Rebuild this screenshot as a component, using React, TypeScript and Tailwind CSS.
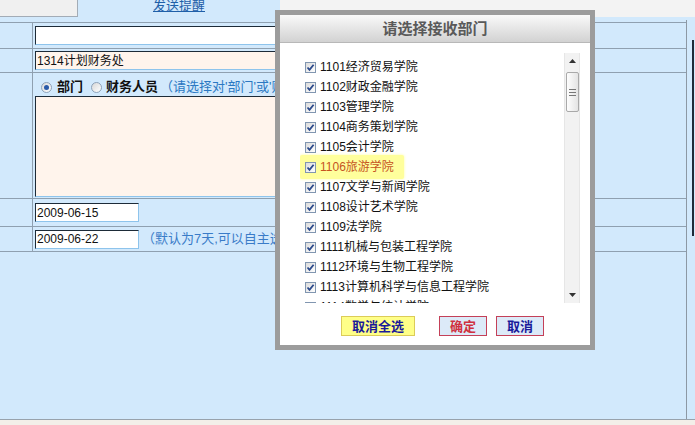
import React from 'react';

const depts = [
  '1101经济贸易学院',
  '1102财政金融学院',
  '1103管理学院',
  '1104商务策划学院',
  '1105会计学院',
  '1106旅游学院',
  '1107文学与新闻学院',
  '1108设计艺术学院',
  '1109法学院',
  '1111机械与包装工程学院',
  '1112环境与生物工程学院',
  '1113计算机科学与信息工程学院',
  '1114数学与统计学院',
];

function CheckBox() {
  return (
    <span className="w-[11px] h-[11px] mr-[4px] shrink-0 border border-[#8196b0] bg-gradient-to-br from-[#dcdcdc] to-white flex items-center justify-center">
      <svg width="9" height="9" viewBox="0 0 9 9" aria-hidden="true">
        <path d="M1.5 4.5 L3.5 6.8 L7.6 1.8" fill="none" stroke="#2c4a8c" strokeWidth="1.8" />
      </svg>
    </span>
  );
}

function Radio({ checked }: { checked?: boolean }) {
  return (
    <span className="w-[11px] h-[11px] rounded-full border border-[#8ea2b8] bg-gradient-to-br from-[#d8d8d8] to-white flex items-center justify-center shrink-0">
      {checked && <span className="w-[5px] h-[5px] rounded-full bg-[#2a5aa8]" />}
    </span>
  );
}

const inputBorder =
  'border border-t-[#1d2b38] border-l-[#1d2b38] border-b-[#8ec4ec] border-r-[#8ec4ec]';

function App() {
  return (
    <div className="relative w-[695px] h-[425px] overflow-hidden bg-[#f3f3f3] font-['Liberation_Sans','Noto_Sans_CJK_SC',sans-serif] text-[12px] text-[#111]">
      {/* tabs */}
      <div className="flex h-[17px]">
        <div className="w-[78px] h-[17px] bg-[#f0f0f0] border-r border-b border-[#a3acb6]" />
        <div className="w-[202px] bg-[#d2e9fc] flex justify-center">
          <span className="text-[13px] leading-[12px] text-[#1f5fa8] underline">发送提醒</span>
        </div>
        <div className="flex-1" />
      </div>

      {/* main */}
      <div className="flex h-[402px] bg-[#d2e9fc]">
        <div className="w-[686px] pt-[5px] flex flex-col">
          <div className="flex h-[26px] border-t border-[#8fa0b0]">
            <div className="w-[33px] border-r border-[#8fa0b0]" />
            <div className="flex items-center pl-[2px]">
              <div className={`w-[545px] h-[19px] bg-white ${inputBorder}`} />
            </div>
          </div>
          <div className="flex h-[24px] border-t border-[#8fa0b0]">
            <div className="w-[33px] border-r border-[#8fa0b0]" />
            <div className="flex items-center pl-[2px]">
              <div className={`w-[545px] h-[19px] bg-[#fff4ec] ${inputBorder} flex items-center pl-[1px] text-[12px]`}>
                1314计划财务处
              </div>
            </div>
          </div>
          <div className="flex h-[126px] border-t border-[#8fa0b0]">
            <div className="w-[33px] border-r border-[#8fa0b0]" />
            <div className="flex flex-col pl-[2px] pt-[6px]">
              <div className="flex items-center h-[16px] pl-[6px] text-[13px] whitespace-nowrap">
                <Radio checked />
                <span className="ml-[5px] font-bold">部门</span>
                <span className="ml-[8px]"><Radio /></span>
                <span className="ml-[4px] font-bold">财务人员</span>
                <span className="ml-[2px] text-[#2b78c2]">（请选择对'部门'或'财务人员'）</span>
              </div>
              <div className={`mt-[1px] w-[545px] h-[101px] bg-[#fff4ec] ${inputBorder}`} />
            </div>
          </div>
          <div className="flex h-[28px] border-t border-[#8fa0b0]">
            <div className="w-[33px] border-r border-[#8fa0b0]" />
            <div className="flex items-center pl-[2px]">
              <div className={`w-[104px] h-[19px] bg-white ${inputBorder} flex items-center pl-[1px] text-[12px]`}>
                2009-06-15
              </div>
            </div>
          </div>
          <div className="flex h-[26px] border-t border-b border-[#8fa0b0]">
            <div className="w-[33px] border-r border-[#8fa0b0]" />
            <div className="flex items-center pl-[2px] whitespace-nowrap">
              <div className={`w-[104px] h-[19px] bg-white ${inputBorder} flex items-center pl-[1px] text-[12px]`}>
                2009-06-22
              </div>
              <span className="ml-[3px] text-[13px] text-[#3a7cc8]">（默认为7天,可以自主选择）</span>
            </div>
          </div>
        </div>
        <div className="w-px mt-[3px] bg-[#8c98a4]" />
        <div className="flex-1 pt-[23px] pl-[5px]">
          <div className="w-[2px] h-[196px] bg-[#1e2a38]" />
        </div>
      </div>

      {/* bottom */}
      <div className="h-[6px] border-t border-[#98a2ac] bg-[#f3efe9]" />

      {/* dialog */}
      <div className="absolute left-[275px] top-[10px] w-[320px] h-[340px] border-[5px] border-[#9c9c9c] bg-white flex flex-col">
        <div className="h-[28px] border-b border-[#b8b8b8] bg-gradient-to-b from-[#fafafa] to-[#d2d2d2] flex items-center justify-center">
          <span className="text-[15px] font-bold text-[#5a5a5a] font-['Noto_Sans_CJK_SC',sans-serif]">请选择接收部门</span>
        </div>
        <div className="flex mt-[10px] ml-[20px]">
          <div className="w-[264px] h-[250px] overflow-hidden pt-[4px]">
            {depts.map((d) =>
              d.startsWith('1106') ? (
                <div
                  key={d}
                  className="flex items-center h-[24px] -my-[2px] w-fit pl-[5px] pr-[10px] bg-[#ffff9c] rounded-[2px] shadow-[0_0_3px_#ffff9c] text-[#c5541f] whitespace-nowrap"
                >
                  <CheckBox />
                  {d}
                </div>
              ) : (
                <div key={d} className="flex items-center h-[20px] pl-[5px] whitespace-nowrap">
                  <CheckBox />
                  {d}
                </div>
              )
            )}
          </div>
          <div className="w-[16px] h-[250px] bg-[#f2f2f2] border-x border-[#e6e6e6] flex flex-col items-center">
            <div className="h-[16px] w-full flex items-center justify-center">
              <svg width="7" height="4" viewBox="0 0 7 4" aria-hidden="true">
                <path d="M0 4 L3.5 0 L7 4 Z" fill="#333" />
              </svg>
            </div>
            <div className="mt-[3px] w-[13px] h-[40px] rounded-[2px] border border-[#a9a9a9] bg-gradient-to-r from-[#fdfdfd] to-[#e4e4e4] flex flex-col items-center justify-center gap-[2px]">
              <span className="w-[7px] h-px bg-[#777]" />
              <span className="w-[7px] h-px bg-[#777]" />
              <span className="w-[7px] h-px bg-[#777]" />
            </div>
            <div className="flex-1" />
            <div className="h-[16px] w-full flex items-center justify-center">
              <svg width="7" height="4" viewBox="0 0 7 4" aria-hidden="true">
                <path d="M0 0 L7 0 L3.5 4 Z" fill="#333" />
              </svg>
            </div>
          </div>
        </div>
        <div className="flex mt-[13px] pl-[61px] text-[13px] font-bold font-['Noto_Sans_CJK_SC',sans-serif]">
          <div className="w-[74px] h-[20px] bg-[#ffff88] border border-[#dccc58] text-[#1a1a9a] flex items-center justify-center">
            取消全选
          </div>
          <div className="ml-[24px] w-[48px] h-[20px] bg-[#dceaf8] border border-[#c44058] text-[#d03040] flex items-center justify-center">
            确定
          </div>
          <div className="ml-[9px] w-[48px] h-[20px] bg-[#dceaf8] border border-[#c44058] text-[#1a1a9a] flex items-center justify-center">
            取消
          </div>
        </div>
      </div>
    </div>
  );
}

export default App;
